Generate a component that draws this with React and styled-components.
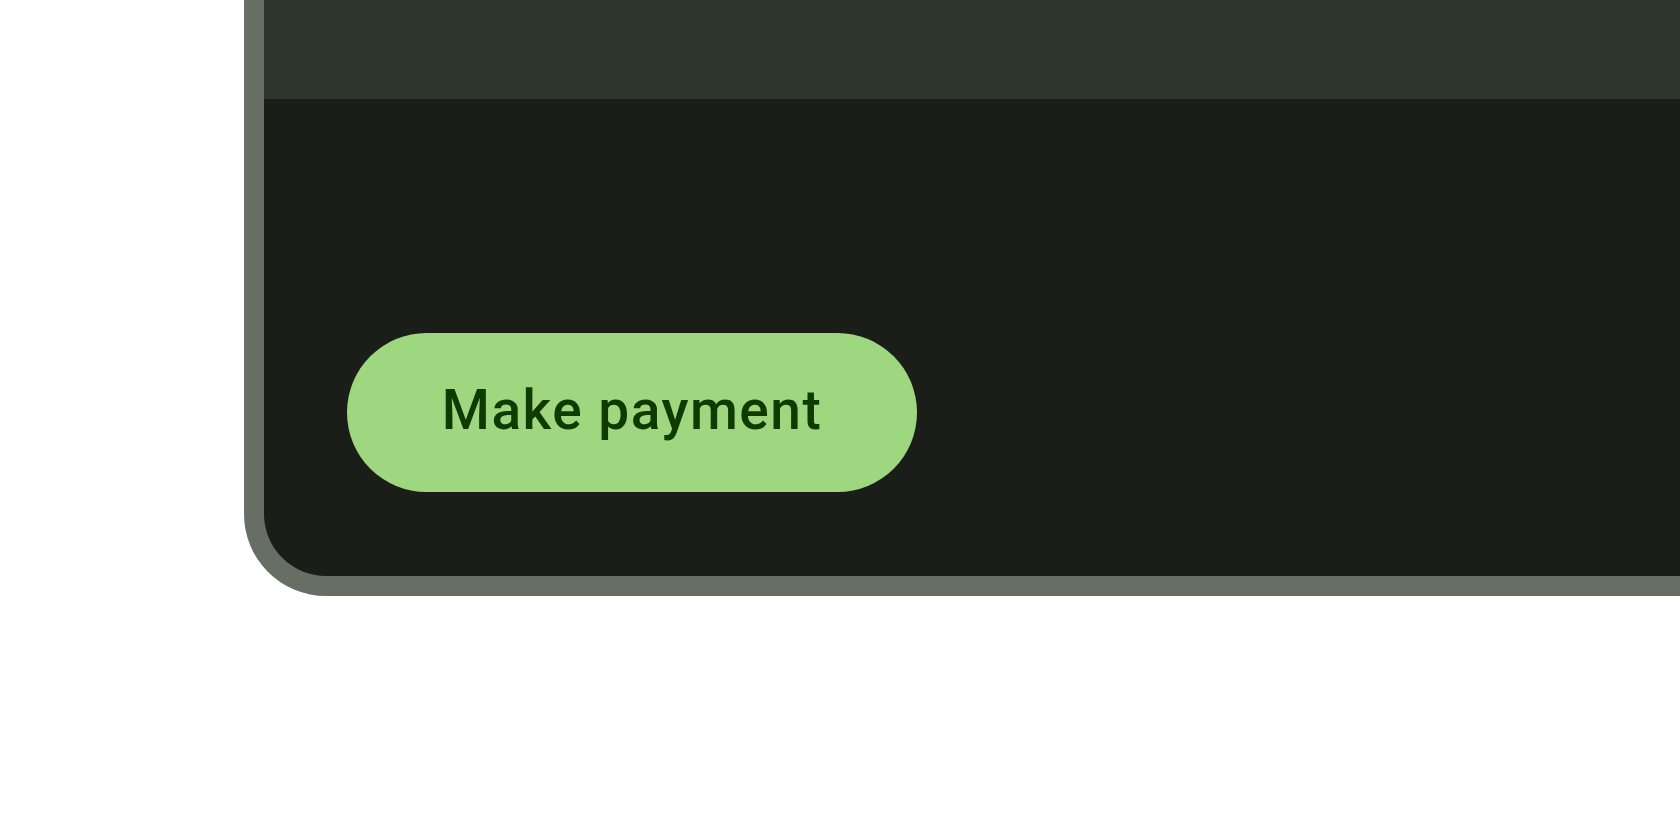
import React from 'react';
import styled, { createGlobalStyle } from 'styled-components';

const GlobalStyle = createGlobalStyle`
    html, body {
        margin: 0;
        padding: 0;
        background-color: #ffffff;
        overflow: hidden;
    }
`;

const Page = styled.div`
    width: 1680px;
    height: 840px;
    padding-left: 244px;
    box-sizing: border-box;
`;

const Frame = styled.div`
    display: flex;
    flex-direction: column;
    height: 596px;
    box-sizing: border-box;
    border-left: 20px solid #676e64;
    border-bottom: 20px solid #676e64;
    border-bottom-left-radius: 82px;
    overflow: hidden;
    background-color: #1b1d18;
`;

const TopBar = styled.div`
    height: 99px;
    flex-shrink: 0;
    background-color: #2e362b;
`;

const Body = styled.div`
    flex: 1;
    display: flex;
    align-items: flex-end;
    padding: 0 0 84px 83px;
`;

const PayButton = styled.button`
    width: 570px;
    height: 159px;
    border: none;
    border-radius: 80px;
    background-color: #9ed780;
    color: #0f3a00;
    font-family: Roboto, "Noto Sans", sans-serif;
    font-size: 55px;
    font-weight: 500;
    letter-spacing: 1.5px;
    cursor: pointer;
    display: flex;
    align-items: center;
    justify-content: center;
    padding: 0 0 6px 0;
`;

export default function App() {
    return (
        <>
            <GlobalStyle />
            <Page>
                <Frame>
                    <TopBar />
                    <Body>
                        <PayButton>Make payment</PayButton>
                    </Body>
                </Frame>
            </Page>
        </>
    );
}
